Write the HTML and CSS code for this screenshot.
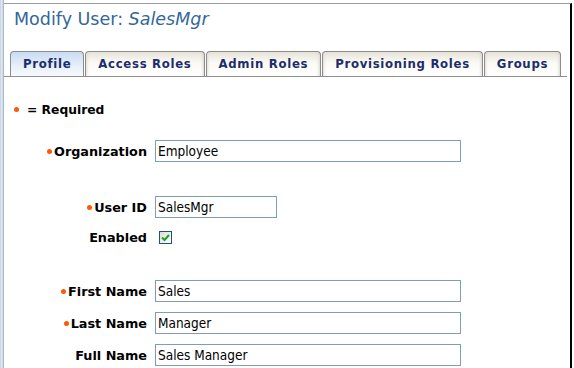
FILE: index.html
```html
<!DOCTYPE html>
<html lang="en">
<head>
    <meta charset="UTF-8">
    <meta name="viewport" content="width=device-width, initial-scale=1.0">
    <title>Modify User</title>
    <link rel="stylesheet" href="styles.css">
</head>
<body>
    <div class="frame">
        <div class="rail"></div>
        <div class="main">
            <h1 class="title">Modify User: <em>SalesMgr</em></h1>
            <ul class="tabs">
                <li class="tab active">Profile</li>
                <li class="tab">Access Roles</li>
                <li class="tab">Admin Roles</li>
                <li class="tab">Provisioning Roles</li>
                <li class="tab">Groups</li>
            </ul>
            <p class="legend"><span class="dot"></span>= Required</p>
            <form class="form">
                <div class="section">
                    <div class="row">
                        <label class="label"><span class="dot"></span>Organization</label>
                        <input class="field wide" type="text" value="Employee">
                    </div>
                </div>
                <div class="section">
                    <div class="row">
                        <label class="label"><span class="dot"></span>User ID</label>
                        <input class="field short" type="text" value="SalesMgr">
                    </div>
                    <div class="row check-row">
                        <label class="label">Enabled</label>
                        <span class="checkbox">
                            <svg width="11" height="11" viewBox="0 0 11 11"><path d="M2 5.5 L4.5 8 L9 3" fill="none" stroke="#21a121" stroke-width="2"/></svg>
                        </span>
                    </div>
                </div>
                <div class="section names">
                    <div class="row">
                        <label class="label"><span class="dot"></span>First Name</label>
                        <input class="field wide" type="text" value="Sales">
                    </div>
                    <div class="row">
                        <label class="label"><span class="dot"></span>Last Name</label>
                        <input class="field wide" type="text" value="Manager">
                    </div>
                    <div class="row">
                        <label class="label">Full Name</label>
                        <input class="field wide" type="text" value="Sales Manager">
                    </div>
                </div>
            </form>
        </div>
    </div>
</body>
</html>
```

FILE: styles.css
```css
body {
    margin: 0;
    padding: 0;
    background: #fff;
    font-family: "DejaVu Sans", Verdana, sans-serif;
    color: #000;
}
.frame {
    display: flex;
    height: 368px;
    overflow: hidden;
}
.rail {
    width: 4px;
    flex: none;
    background: linear-gradient(to right, #c3cfdd, #e6edf5 50%, #97a8bd);
}
.main {
    flex: 1;
    margin-top: 3px;
    margin-right: 2px;
    border-top: 1px solid #9c9c9c;
    border-right: 2px solid #000;
}
.title {
    margin: 4px 0 0 10px;
    font-family: "DejaVu Sans", sans-serif;
    font-size: 17.5px;
    line-height: 22px;
    font-weight: normal;
    color: #34679a;
}
.title em {
    font-style: italic;
}
.tabs {
    display: flex;
    gap: 1px;
    list-style: none;
    margin: 21px 3px 0 0;
    padding: 0 0 0 6px;
    border-bottom: 1px solid #8f8f8f;
}
.tab {
    flex: none;
    white-space: nowrap;
    height: 24px;
    line-height: 24px;
    padding: 0 12px;
    border: 1px solid #8c8c8c;
    border-bottom: none;
    border-radius: 4px 4px 0 0;
    background: linear-gradient(to bottom, #e7e3d8, #fbfaf6 45%, #fff);
    box-shadow: inset 3px 0 3px -2px #e2ded2, inset -3px 0 3px -2px #d8d4c8;
    font-family: "DejaVu Sans Condensed", "DejaVu Sans", sans-serif;
    font-size: 13px;
    letter-spacing: 0.7px;
    font-weight: bold;
    color: #1b2d6d;
}
.tab.active {
    background: linear-gradient(to bottom, #c9dcf2, #e8f0fa 60%, #f7fafd);
    box-shadow: none;
}
.legend {
    margin: 25px 0 0 10px;
    font-size: 12.3px;
    line-height: 16px;
    font-weight: bold;
    display: flex;
    align-items: center;
}
.legend .dot {
    margin-right: 8px;
}
.dot {
    display: inline-block;
    width: 5px;
    height: 5px;
    border-radius: 50%;
    background: #fa5a0a;
    margin-right: 2px;
    vertical-align: middle;
    position: relative;
    top: -1px;
}
.form {
    margin-top: 22px;
}
.section + .section {
    margin-top: 34px;
}
.section.names {
    margin-top: 32px;
}
.row {
    display: grid;
    grid-template-columns: 143px auto;
    column-gap: 8px;
    align-items: center;
    height: 22px;
}
.row + .row {
    margin-top: 10px;
}
.row.check-row {
    margin-top: 8px;
}
.label {
    text-align: right;
    font-size: 12.8px;
    font-weight: bold;
}
.field {
    box-sizing: border-box;
    height: 22px;
    border: 1px solid #7f9db9;
    padding: 0 2px;
    font-family: "DejaVu Sans Condensed", "DejaVu Sans", sans-serif;
    font-size: 13.5px;
    color: #000;
    outline: none;
}
.field.wide {
    width: 306px;
}
.field.short {
    width: 122px;
}
.checkbox {
    box-sizing: border-box;
    width: 13px;
    height: 13px;
    margin-left: 4px;
    border: 1px solid #1c5180;
    background: linear-gradient(135deg, #dcdcd7, #fff);
    display: flex;
    align-items: center;
    justify-content: center;
}
```
